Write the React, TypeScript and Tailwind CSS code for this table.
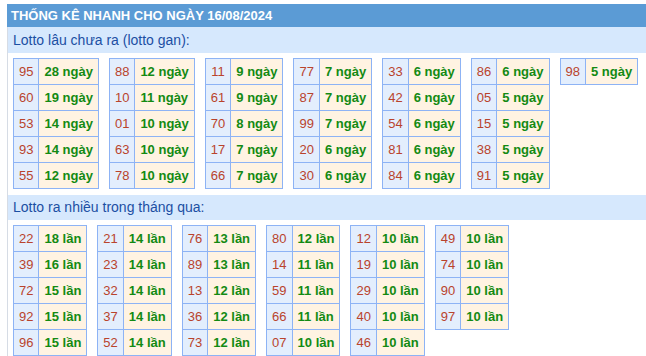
import React from "react";

type Row = [string, string];

const gan: Row[][] = [
  [["95", "28"], ["60", "19"], ["53", "14"], ["93", "14"], ["55", "12"]],
  [["88", "12"], ["10", "11"], ["01", "10"], ["63", "10"], ["78", "10"]],
  [["11", "9"], ["61", "9"], ["70", "8"], ["17", "7"], ["66", "7"]],
  [["77", "7"], ["87", "7"], ["99", "7"], ["20", "6"], ["30", "6"]],
  [["33", "6"], ["42", "6"], ["54", "6"], ["81", "6"], ["84", "6"]],
  [["86", "6"], ["05", "5"], ["15", "5"], ["38", "5"], ["91", "5"]],
  [["98", "5"]],
];

const freq: Row[][] = [
  [["22", "18"], ["39", "16"], ["72", "15"], ["92", "15"], ["96", "15"]],
  [["21", "14"], ["23", "14"], ["32", "14"], ["37", "14"], ["52", "14"]],
  [["76", "13"], ["89", "13"], ["13", "12"], ["36", "12"], ["73", "12"]],
  [["80", "12"], ["14", "11"], ["59", "11"], ["66", "11"], ["07", "10"]],
  [["12", "10"], ["19", "10"], ["29", "10"], ["40", "10"], ["46", "10"]],
  [["49", "10"], ["74", "10"], ["90", "10"], ["97", "10"]],
];

function Tbl({ rows, unit }: { rows: Row[]; unit: string }) {
  return (
    <table className="border-collapse self-start">
      <tbody>
        {rows.map(([n, v], i) => (
          <tr key={i}>
            <td className="h-[26px] border border-[#8db3f5] bg-[#e3eefd] px-[5px] text-center text-[13px] leading-none text-[#b9432c]">
              {n}
            </td>
            <td className="h-[26px] border border-[#8db3f5] bg-[#fff3e2] px-[5px] text-left text-[13px] font-bold leading-none text-[#138a13]">
              {v} {unit}
            </td>
          </tr>
        ))}
      </tbody>
    </table>
  );
}

export default function App() {
  return (
    <div
      className="h-[356px] w-[646px] overflow-hidden bg-white pt-[4px] pl-[7px]"
      style={{ fontFamily: '"Liberation Sans", Arial, sans-serif' }}
    >
      <div className="flex h-[23px] items-center bg-[#5b9bd5] pl-[4px] text-[13px] font-bold text-white">
        THỐNG KÊ NHANH CHO NGÀY 16/08/2024
      </div>
      <div className="border-l border-[#d6dce5]">
        <div className="flex h-[26px] items-center bg-[#d6e8fd] pl-[5px] text-[14px] text-[#1c4fa3]">
          Lotto lâu chưa ra (lotto gan):
        </div>
        <div className="mt-[5px] mb-[6px] flex gap-[10px] pl-[5px]">
          {gan.map((t, i) => (
            <Tbl key={i} rows={t} unit="ngày" />
          ))}
        </div>
        <div className="flex h-[25px] items-center bg-[#d6e8fd] pl-[5px] text-[14px] text-[#1c4fa3]">
          Lotto ra nhiều trong tháng qua:
        </div>
        <div className="mt-[5px] flex gap-[10px] pl-[5px]">
          {freq.map((t, i) => (
            <Tbl key={i} rows={t} unit="lần" />
          ))}
        </div>
      </div>
    </div>
  );
}
